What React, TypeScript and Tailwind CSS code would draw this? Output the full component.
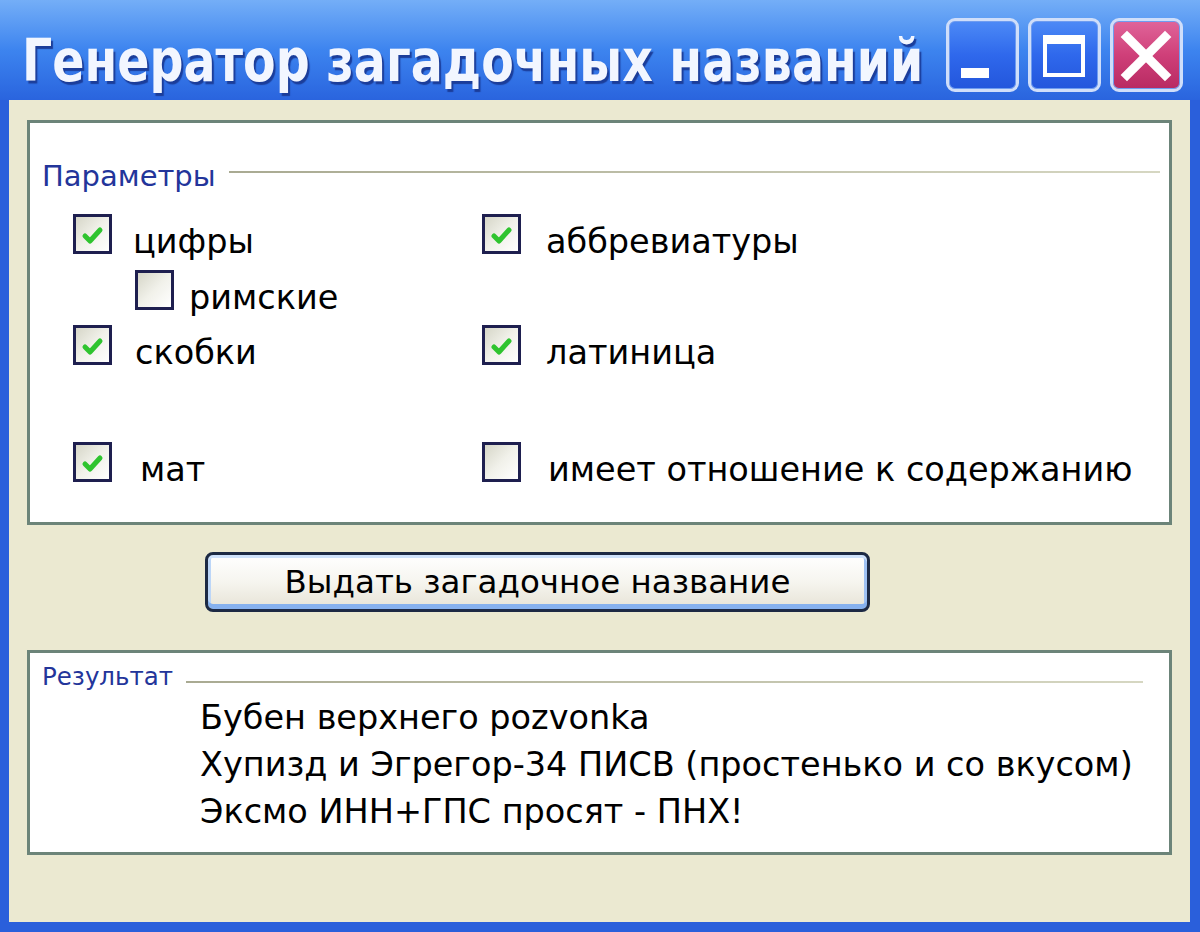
const CheckBox = ({ checked }: { checked: boolean }) => (
  <div className="w-[39px] h-[40px] shrink-0 border-[3px] border-[#1e1f4f] bg-gradient-to-br from-[#d6d6c8] via-[#f1f1ea] to-white flex items-center justify-center">
    {checked && (
      <svg width="33" height="34" viewBox="0 0 33 34">
        <path d="M9 19 L14 24 L24 13" fill="none" stroke="#2fc42f" strokeWidth="5" strokeLinecap="round" strokeLinejoin="round" />
      </svg>
    )}
  </div>
)

const Option = ({ checked, label, gap }: { checked: boolean; label: string; gap: string }) => (
  <div className="flex items-start h-[40px]">
    <CheckBox checked={checked} />
    <span className={"mt-[8px] leading-[40px] whitespace-nowrap " + gap}>{label}</span>
  </div>
)

const TitleButton = ({ kind }: { kind: "min" | "max" | "close" }) => {
  const bg =
    kind === "close"
      ? "bg-gradient-to-b from-[#e0649a] via-[#cf3f79] to-[#b82a62]"
      : "bg-gradient-to-b from-[#4d8af6] via-[#2f68ec] to-[#2356dc]"
  return (
    <div className={"w-[73px] h-[74px] rounded-[9px] border-[3px] border-[#cfdefa] shadow-[inset_0_0_0_1px_#6e9cf0] " + bg}>
      <svg width="67" height="68" viewBox="0 0 67 68">
        {kind === "min" && <rect x="12" y="47" width="28" height="10" fill="#fff" />}
        {kind === "max" && (
          <g fill="none" stroke="#fff">
            <rect x="14" y="16" width="38" height="38" strokeWidth="4" />
            <rect x="14" y="17" width="38" height="6" fill="#fff" strokeWidth="0" />
          </g>
        )}
        {kind === "close" && (
          <g stroke="#fff" strokeWidth="9" strokeLinecap="square">
            <path d="M14 16 L52 54" />
            <path d="M52 16 L14 54" />
          </g>
        )}
      </svg>
    </div>
  )
}

export default function App() {
  return (
    <div className="w-[1200px] h-[932px] flex flex-col bg-[#2a5fdb] font-['DejaVu_Sans',sans-serif] text-black overflow-hidden">
      <div className="h-[100px] shrink-0 flex justify-between bg-gradient-to-b from-[#74aef7] via-[#3d84ef] to-[#2a64de]">
        <div className="ml-[22px] mt-[31px] text-[47.5px] leading-none font-bold text-[#f2f6ff] whitespace-nowrap origin-top scale-y-[1.25] [text-shadow:2px_2px_1px_#1b3d9a]">
          Генератор загадочных названий
        </div>
        <div className="flex gap-[9px] mt-[18px] mr-[17px]">
          <TitleButton kind="min" />
          <TitleButton kind="max" />
          <TitleButton kind="close" />
        </div>
      </div>

      <div className="flex-1 ml-[9px] mr-[10px] mb-[10px] bg-[#ebe9d1] flex flex-col">
        {/* parameters */}
        <div className="mx-[18px] mt-[20px] h-[405px] border-[3px] border-[#6c8479] bg-white flex flex-col text-[33.5px]">
          <div className="flex items-start mt-[39px] pl-[12px] pr-[9px]">
            <span className="text-[29px] leading-none text-[#23359a]">Параметры</span>
            <div className="flex-1 h-[2px] mt-[9px] ml-[13px] bg-gradient-to-r from-[#a9aa92] to-[#d6d7c2]" />
          </div>
          <div className="flex pl-[43px] mt-[23px]">
            <div className="w-[409px]">
              <Option checked label="цифры" gap="ml-[21px]" />
            </div>
            <Option checked label="аббревиатуры" gap="ml-[25px]" />
          </div>
          <div className="flex pl-[105px] mt-[16px]">
            <Option checked={false} label="римские" gap="ml-[15px]" />
          </div>
          <div className="flex pl-[43px] mt-[15px]">
            <div className="w-[409px]">
              <Option checked label="скобки" gap="ml-[23px]" />
            </div>
            <Option checked label="латиница" gap="ml-[25px]" />
          </div>
          <div className="flex pl-[43px] mt-[77px]">
            <div className="w-[409px]">
              <Option checked label="мат" gap="ml-[28px]" />
            </div>
            <Option checked={false} label="имеет отношение к содержанию" gap="ml-[27px]" />
          </div>
        </div>

        {/* action button */}
        <div className="ml-[196px] mt-[27px] w-[665px] h-[60px] rounded-[8px] border-[3px] border-[#1d2a44] bg-gradient-to-b from-white via-[#f6f5ef] to-[#e6e3d6] shadow-[inset_0_3px_0_#cfe2fb,inset_0_-5px_0_#86b1ee,inset_3px_0_0_#bcd6f8,inset_-3px_0_0_#9fc2f3] flex items-center justify-center text-[32.5px] leading-none">
          Выдать загадочное название
        </div>

        {/* result */}
        <div className="mx-[18px] mt-[38px] h-[205px] border-[3px] border-[#6c8479] bg-white flex flex-col">
          <div className="flex items-start mt-[12px] pl-[12px] pr-[26px]">
            <span className="text-[24.5px] leading-none text-[#23359a]">Результат</span>
            <div className="flex-1 h-[2px] mt-[16px] ml-[13px] bg-gradient-to-r from-[#a9aa92] to-[#d6d7c2]" />
          </div>
          <div className="pl-[170px] mt-[4px] text-[33.5px] leading-[47px] whitespace-nowrap">
            <div>Бубен верхнего pozvonka</div>
            <div>Хупизд и Эгрегор-34 ПИСВ (простенько и со вкусом)</div>
            <div>Эксмо ИНН+ГПС просят - ПНХ!</div>
          </div>
        </div>
      </div>
    </div>
  )
}
